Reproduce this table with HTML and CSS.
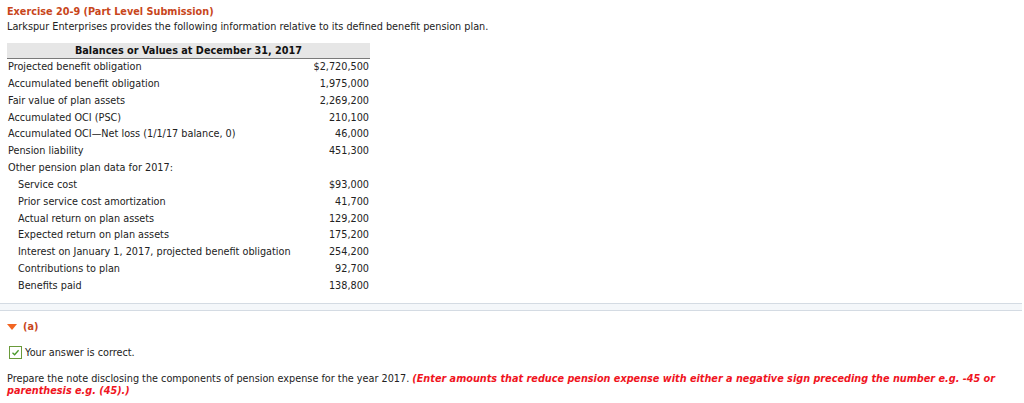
FILE: index.html
```html
<!DOCTYPE html>
<html>
<head>
<meta charset="utf-8">
<link rel="stylesheet" href="styles.css">
</head>
<body>
<div class="page">
  <h1 class="title">Exercise 20-9 (Part Level Submission)</h1>
  <p class="intro">Larkspur Enterprises provides the following information relative to its defined benefit pension plan.</p>
  <table class="data">
    <thead>
      <tr><th colspan="2">Balances or Values at December 31, 2017</th></tr>
    </thead>
    <tbody>
      <tr><td>Projected benefit obligation</td><td class="num">$2,720,500</td></tr>
      <tr><td>Accumulated benefit obligation</td><td class="num">1,975,000</td></tr>
      <tr><td>Fair value of plan assets</td><td class="num">2,269,200</td></tr>
      <tr><td>Accumulated OCI (PSC)</td><td class="num">210,100</td></tr>
      <tr><td>Accumulated OCI—Net loss (1/1/17 balance, 0)</td><td class="num">46,000</td></tr>
      <tr><td>Pension liability</td><td class="num">451,300</td></tr>
      <tr><td>Other pension plan data for 2017:</td><td class="num"></td></tr>
      <tr><td class="ind">Service cost</td><td class="num">$93,000</td></tr>
      <tr><td class="ind">Prior service cost amortization</td><td class="num">41,700</td></tr>
      <tr><td class="ind">Actual return on plan assets</td><td class="num">129,200</td></tr>
      <tr><td class="ind">Expected return on plan assets</td><td class="num">175,200</td></tr>
      <tr><td class="ind">Interest on January 1, 2017, projected benefit obligation</td><td class="num">254,200</td></tr>
      <tr><td class="ind">Contributions to plan</td><td class="num">92,700</td></tr>
      <tr><td class="ind">Benefits paid</td><td class="num">138,800</td></tr>
    </tbody>
  </table>
  <div class="band"></div>
  <div class="part">
    <span class="tri"></span><span class="part-label">(a)</span>
  </div>
  <div class="correct">
    <span class="check"><svg width="9" height="9" viewBox="0 0 9 9"><path d="M1.5 4.8 L3.6 6.8 L7.6 2.2" fill="none" stroke="#4a9a2a" stroke-width="1.3"/></svg></span>
    <span>Your answer is correct.</span>
  </div>
  <p class="prompt">Prepare the note disclosing the components of pension expense for the year 2017. <em class="hint">(Enter amounts that reduce pension expense with either a negative sign preceding the number e.g. -45 or parenthesis e.g. (45).)</em></p>
</div>
</body>
</html>
```

FILE: styles.css
```css
html, body {
  margin: 0;
  padding: 0;
  background: #fff;
}
body {
  font-family: "DejaVu Sans", Verdana, sans-serif;
  font-size: 9.7px;
  color: #222;
}
.page {
  padding: 5px 0 0 7px;
}
.title {
  margin: 0;
  font-size: 9.7px;
  font-weight: bold;
  color: #c8461b;
  line-height: 14px;
}
.intro {
  margin: 1px 0 0 0;
  line-height: 14px;
}
.data {
  border-collapse: collapse;
  margin-top: 9px;
  width: 363px;
}
.data th {
  background: #e6e6e6;
  border-bottom: 1px solid #7a7a7a;
  font-weight: bold;
  font-size: 9.7px;
  text-align: center;
  height: 15px;
  padding: 0;
  line-height: 15px;
  color: #111;
}
.data td {
  padding: 0 0 0 1px;
  line-height: 16.85px;
  white-space: nowrap;
}
.data td.ind {
  padding-left: 11px;
}
.data td.num {
  text-align: right;
  padding-right: 1px;
}
.band {
  margin: 8px 0 0 -7px;
  width: 1022px;
  height: 6px;
  border-top: 1px solid #d4dbe3;
  border-bottom: 1px solid #d4dbe3;
  background: #f4f7fa;
}
.part {
  display: flex;
  align-items: center;
  margin-top: 9px;
  height: 14px;
}
.tri {
  width: 0;
  height: 0;
  border-left: 5px solid transparent;
  border-right: 5px solid transparent;
  border-top: 6px solid #f26522;
  margin-right: 6px;
}
.part-label {
  color: #c8461b;
  font-weight: bold;
  font-size: 9.7px;
}
.correct {
  display: flex;
  align-items: center;
  margin-top: 12px;
  margin-left: 2px;
  gap: 3px;
}
.check {
  width: 11px;
  height: 11px;
  border: 1px solid #6a9a3a;
  display: flex;
  align-items: center;
  justify-content: center;
  background: #fff;
}
.prompt {
  margin: 14px 0 0 0;
  line-height: 12px;
  width: 1000px;
}
.hint {
  color: #f0141e;
  font-weight: bold;
}
```
